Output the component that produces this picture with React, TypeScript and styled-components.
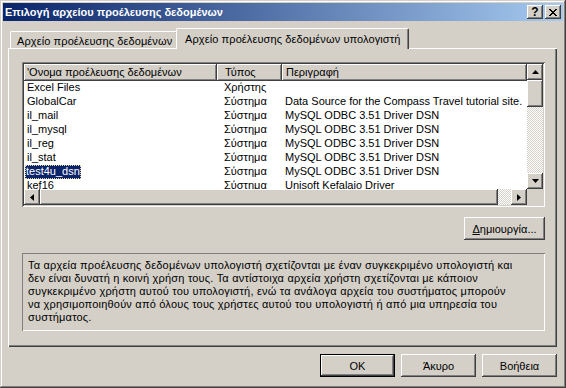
import React from 'react';
import styled, { createGlobalStyle, css } from 'styled-components';

const FACE = '#D4D0C8';
const SHADOW = '#808080';
const DARK = '#404040';
const NAVY = '#0A246A';

const GlobalStyle = createGlobalStyle`
  html, body {
    margin: 0;
    padding: 0;
    background: ${FACE};
  }
  body {
    font-family: 'Liberation Sans', Arial, sans-serif;
    font-size: 11px;
    color: #000;
  }
`;

const raised = css`
  background: ${FACE};
  box-shadow: inset -1px -1px ${DARK}, inset 1px 1px #fff, inset -2px -2px ${SHADOW}, inset 2px 2px ${FACE};
`;

const Window = styled.div`
  width: 566px;
  height: 388px;
  box-sizing: border-box;
  padding: 3px;
  background: ${FACE};
  box-shadow: inset -1px -1px ${DARK}, inset 1px 1px ${FACE}, inset -2px -2px ${SHADOW}, inset 2px 2px #fff;
  display: flex;
  flex-direction: column;
`;

const TitleBar = styled.div`
  height: 18px;
  display: flex;
  align-items: flex-start;
  padding: 0 2px;
  background: linear-gradient(to right, ${NAVY}, #a6caf0);
  color: #fff;
  font-weight: bold;
`;

const TitleText = styled.div`
  flex: 1;
  line-height: 18px;
  white-space: nowrap;
`;

const CaptionButton = styled.div`
  ${raised};
  width: 16px;
  height: 14px;
  margin: 2px 0 0 2px;
  display: flex;
  align-items: center;
  justify-content: center;
  color: #000;
  font-size: 12px;
  line-height: 14px;
`;

const Body = styled.div`
  flex: 1;
  display: flex;
  flex-direction: column;
  padding: 7px 6px 0 5px;
`;

const TabRow = styled.div`
  height: 20px;
  display: flex;
  align-items: flex-end;
  padding-left: 2px;
  position: relative;
  z-index: 1;
`;

const Tab = styled.div<{ $active?: boolean; $w: number }>`
  width: ${(p) => p.$w}px;
  box-sizing: border-box;
  background: ${FACE};
  border-top: 1px solid #fff;
  border-left: 1px solid #fff;
  border-right: 1px solid ${DARK};
  border-radius: 2px 2px 0 0;
  box-shadow: inset -1px 0 ${SHADOW};
  white-space: nowrap;
  letter-spacing: 0.1px;
  ${(p) =>
    p.$active
      ? css`
          height: 21px;
          margin: 0 0 -1px -2px;
          padding: 4px 0 0 8px;
          line-height: 12px;
        `
      : css`
          height: 17px;
          padding: 3px 0 0 6px;
          line-height: 12px;
        `}
`;

const Panel = styled.div`
  height: 299px;
  box-sizing: border-box;
  padding: 14px 12px 0 14px;
  box-shadow: inset 1px 1px #fff, inset -1px -1px ${DARK}, inset -2px -2px ${SHADOW};
  display: flex;
  flex-direction: column;
`;

const ListBox = styled.div`
  height: 145px;
  box-sizing: border-box;
  padding: 2px;
  background: #fff;
  box-shadow: inset 1px 1px ${SHADOW}, inset -1px -1px #fff, inset 2px 2px ${DARK}, inset -2px -2px ${FACE};
  display: grid;
  grid-template-columns: 1fr 16px;
  grid-template-rows: 1fr 16px;
`;

const ListContent = styled.div`
  overflow: hidden;
`;

const Row = styled.div<{ $header?: boolean }>`
  display: flex;
  height: ${(p) => (p.$header ? 17 : 14)}px;
  line-height: ${(p) => (p.$header ? 16 : 13)}px;
`;

const Cell = styled.div<{ $w: number; $pad: number }>`
  flex: 0 0 ${(p) => p.$w}px;
  box-sizing: border-box;
  padding-left: ${(p) => p.$pad}px;
  white-space: nowrap;
  overflow: hidden;
`;

const HeaderCell = styled(Cell)`
  ${raised};
`;

const Selected = styled.span`
  display: inline-block;
  margin-left: -2px;
  padding: 0 1px;
  height: 14px;
  box-sizing: border-box;
  background: ${NAVY};
  color: #fff;
  outline: 1px dotted #e6d8a0;
  outline-offset: -1px;
`;

const ScrollBar = styled.div<{ $vertical?: boolean }>`
  display: flex;
  flex-direction: ${(p) => (p.$vertical ? 'column' : 'row')};
`;

const ScrollButton = styled.div`
  ${raised};
  flex: 0 0 16px;
  height: 16px;
  width: 16px;
  display: flex;
  align-items: center;
  justify-content: center;
`;

const Thumb = styled.div<{ $size: number }>`
  ${raised};
  flex: 0 0 ${(p) => p.$size}px;
`;

const Track = styled.div`
  flex: 1;
  background-color: ${FACE};
  background-image: conic-gradient(#fff 25%, ${FACE} 0 50%, #fff 0 75%, ${FACE} 0);
  background-size: 2px 2px;
`;

const Corner = styled.div`
  background: ${FACE};
`;

const ActionRow = styled.div<{ $top: number; $gap?: number }>`
  display: flex;
  justify-content: flex-end;
  gap: ${(p) => p.$gap ?? 0}px;
  margin-top: ${(p) => p.$top}px;
`;

const Button = styled.div<{ $w: number; $default?: boolean }>`
  width: ${(p) => p.$w}px;
  height: 23px;
  box-sizing: border-box;
  display: flex;
  align-items: center;
  justify-content: center;
  background: ${FACE};
  white-space: nowrap;
  box-shadow: ${(p) =>
    p.$default
      ? `inset 0 0 0 1px #000, inset -2px -2px ${DARK}, inset 2px 2px #fff, inset -3px -3px ${SHADOW}`
      : `inset -1px -1px ${DARK}, inset 1px 1px #fff, inset -2px -2px ${SHADOW}`};
`;

const Info = styled.div`
  margin-top: 13px;
  height: 78px;
  box-sizing: border-box;
  padding: 6px 6px 0 6px;
  box-shadow: inset 1px 1px ${SHADOW}, inset -1px -1px #fff;
  line-height: 13px;
  letter-spacing: 0.2px;
  white-space: nowrap;
`;

const Arrow = ({ dir }: { dir: 'up' | 'down' | 'left' | 'right' }) => {
  const pts = {
    up: '0,4 3.5,0 7,4',
    down: '0,0 7,0 3.5,4',
    left: '4,0 4,7 0,3.5',
    right: '0,0 0,7 4,3.5',
  }[dir];
  const vert = dir === 'up' || dir === 'down';
  return (
    <svg width={vert ? 7 : 4} height={vert ? 4 : 7} viewBox={vert ? '0 0 7 4' : '0 0 4 7'}>
      <polygon points={pts} fill="#000" />
    </svg>
  );
};

const CloseGlyph = () => (
  <svg width="8" height="7" viewBox="0 0 8 7" shapeRendering="crispEdges">
    {[
      [0, 0], [6, 0], [1, 1], [5, 1], [2, 2], [4, 2], [3, 3],
      [2, 4], [4, 4], [1, 5], [5, 5], [0, 6], [6, 6],
    ].map(([x, y]) => (
      <rect key={`${x}-${y}`} x={x} y={y} width="2" height="1" fill="#000" />
    ))}
  </svg>
);

const columns = [
  { title: "'Ονομα προέλευσης δεδομένων", width: 193, head: 3, pad: 3 },
  { title: 'Τύπος', width: 65, head: 8, pad: 7 },
  { title: 'Περιγραφή', width: 245, head: 4, pad: 3 },
];

const mysql = 'MySQL ODBC 3.51 Driver DSN';
const rows = [
  ['Excel Files', 'Χρήστης', ''],
  ['GlobalCar', 'Σύστημα', 'Data Source for the Compass Travel tutorial site.'],
  ['il_mail', 'Σύστημα', mysql],
  ['il_mysql', 'Σύστημα', mysql],
  ['il_reg', 'Σύστημα', mysql],
  ['il_stat', 'Σύστημα', mysql],
  ['test4u_dsn', 'Σύστημα', mysql],
  ['kef16', 'Σύστημα', 'Unisoft Kefalaio Driver'],
];

const info = [
  'Τα αρχεία προέλευσης δεδομένων υπολογιστή σχετίζονται με έναν συγκεκριμένο υπολογιστή και',
  'δεν είναι δυνατή η κοινή χρήση τους. Τα αντίστοιχα αρχεία χρήστη σχετίζονται με κάποιον',
  'συγκεκριμένο χρήστη αυτού του υπολογιστή, ενώ τα ανάλογα αρχεία του συστήματος μπορούν',
  'να χρησιμοποιηθούν από όλους τους χρήστες αυτού του υπολογιστή ή από μια υπηρεσία του',
  'συστήματος.',
];

const App = () => {
  return (
    <>
      <GlobalStyle />
      <Window>
        <TitleBar>
          <TitleText>Επιλογή αρχείου προέλευσης δεδομένων</TitleText>
          <CaptionButton>?</CaptionButton>
          <CaptionButton>
            <CloseGlyph />
          </CaptionButton>
        </TitleBar>
        <Body>
          <TabRow>
            <Tab $w={168}>Αρχείο προέλευσης δεδομένων</Tab>
            <Tab $w={233} $active>
              Αρχείο προέλευσης δεδομένων υπολογιστή
            </Tab>
          </TabRow>
          <Panel>
            <ListBox>
              <ListContent>
                <Row $header>
                  {columns.map((c) => (
                    <HeaderCell key={c.title} $w={c.width} $pad={c.head}>
                      {c.title}
                    </HeaderCell>
                  ))}
                </Row>
                {rows.map((r) => (
                  <Row key={r[0]}>
                    {r.map((v, i) => (
                      <Cell key={i} $w={columns[i].width} $pad={columns[i].pad}>
                        {i === 0 && v === 'test4u_dsn' ? <Selected>{v}</Selected> : v}
                      </Cell>
                    ))}
                  </Row>
                ))}
              </ListContent>
              <ScrollBar $vertical>
                <ScrollButton>
                  <Arrow dir="up" />
                </ScrollButton>
                <Thumb $size={27} />
                <Track />
                <ScrollButton>
                  <Arrow dir="down" />
                </ScrollButton>
              </ScrollBar>
              <ScrollBar>
                <ScrollButton>
                  <Arrow dir="left" />
                </ScrollButton>
                <Thumb $size={458} />
                <Track />
                <ScrollButton>
                  <Arrow dir="right" />
                </ScrollButton>
              </ScrollBar>
              <Corner />
            </ListBox>
            <ActionRow $top={10}>
              <Button $w={81}>
                <u>Δ</u>ημιουργία...
              </Button>
            </ActionRow>
            <Info>
              {info.map((l) => (
                <div key={l}>{l}</div>
              ))}
            </Info>
          </Panel>
          <ActionRow $top={7} $gap={6}>
            <Button $w={75} $default>
              OK
            </Button>
            <Button $w={75}>Άκυρο</Button>
            <Button $w={75}>Βοήθεια</Button>
          </ActionRow>
        </Body>
      </Window>
    </>
  );
};

export default App;
